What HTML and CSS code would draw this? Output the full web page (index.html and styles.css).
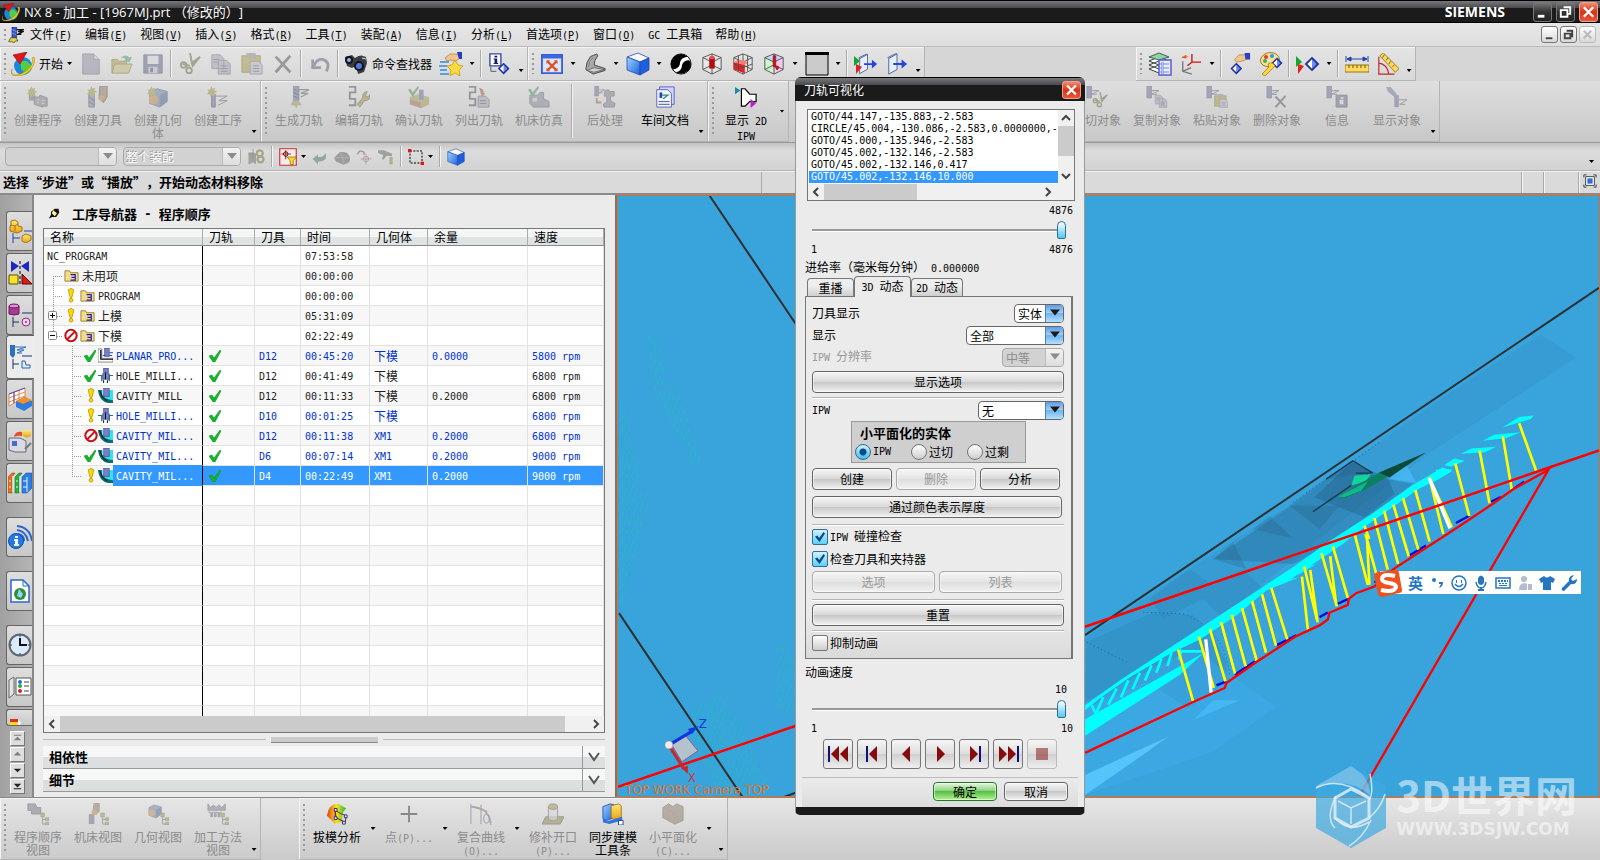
FILE: index.html
```html
<!DOCTYPE html>
<html lang="zh-CN">

<head>
    <meta charset="UTF-8">
    <meta name="viewport" content="width=device-width, initial-scale=1.0">
    <title>NX 8 - 加工</title>
    <link rel="stylesheet" href="styles.css">
</head>

<body>
    <!-- icon library -->
    <svg class="defs" aria-hidden="true">
        <defs>
            <linearGradient id="g-blue" x1="0" y1="0" x2="1" y2="1">
                <stop offset="0" stop-color="#9fd4ff" />
                <stop offset="1" stop-color="#1c62dd" />
            </linearGradient>
            <linearGradient id="g-gold" x1="0" y1="0" x2="0" y2="1">
                <stop offset="0" stop-color="#ffe978" />
                <stop offset="1" stop-color="#e5a414" />
            </linearGradient>
            <linearGradient id="g-heat" x1="0" y1="0" x2="1" y2="0">
                <stop offset="0" stop-color="#e33b1c" />
                <stop offset=".5" stop-color="#f7e51f" />
                <stop offset="1" stop-color="#22b93a" />
            </linearGradient>
        </defs>
        <symbol id="nx" viewBox="0 0 24 24">
            <circle cx="12" cy="14" r="9" fill="#1689dd" />
            <path d="M6 9q5 2 4 8l5 5q6-2 6-8l-5-5z" fill="#54cc46" />
            <path d="M1 17q-2 6 4 6q9-1 15-9q3-5 1-8l2-1q2 4-1 9q-6 10-16 10q-8 0-5-7z" fill="#ffd22e" stroke="#a97606" stroke-width=".5" />
            <path d="M2 3l14-3l-7 12z" fill="#e3141b" stroke="#82080c" stroke-width=".6" />
        </symbol>
        <symbol id="new" viewBox="0 0 24 24">
            <path d="M3 1h12l6 6v16H3z" fill="#8e90a4" stroke="#6b6c7c" />
            <path d="M15 1v6h6" fill="#c8c8d4" stroke="#6b6c7c" />
        </symbol>
        <symbol id="open" viewBox="0 0 24 24">
            <path d="M1 7h6l2 2h8v12H1z" fill="#a49a4e" stroke="#7a7138" />
            <path d="M4 12h19l-4 10H1z" fill="#c2b974" stroke="#7a7138" />
            <path d="M10 6q6-6 10-1l3-1l-3 6l-6-2l2-1q-2-3-6-1z" fill="#4b9a6c" />
        </symbol>
        <symbol id="save" viewBox="0 0 24 24">
            <path d="M2 2h20v20H2z" fill="#63678a" stroke="#4b4e6c" />
            <path d="M6 3h12v9H6z" fill="#d6d6dc" />
            <path d="M7 15h10v7H7z" fill="#b9bac6" />
            <path d="M9 16h3v5H9z" fill="#4b4e6c" />
        </symbol>
        <symbol id="cut" viewBox="0 0 24 24">
            <path d="M12 0l2 11l9-7l-8 10zM12 14L4 12" fill="#8a895e" stroke="#6c6b45" stroke-width="2" />
            <circle cx="5" cy="13" r="3" fill="none" stroke="#6c6b45" stroke-width="2" />
            <circle cx="11" cy="19" r="3" fill="none" stroke="#6c6b45" stroke-width="2" />
        </symbol>
        <symbol id="copy" viewBox="0 0 24 24">
            <path d="M2 2h9l4 4v11H2zM9 8h9l4 4v11H9z" fill="#a3a4b4" stroke="#6b6c80" />
            <path d="M4 7h6M4 10h4M12 14h7M12 17h7M12 20h7" stroke="#5a5b70" />
        </symbol>
        <symbol id="paste" viewBox="0 0 24 24">
            <path d="M1 3h20v18H1z" fill="#a59a48" stroke="#77702f" />
            <path d="M6 0h10v5H6z" fill="#8a8b98" />
            <path d="M10 9h9l4 4v10H10z" fill="#b8b8c6" stroke="#6b6c80" />
            <path d="M13 14h7M13 17h7M13 20h7" stroke="#5a5b70" />
        </symbol>
        <symbol id="del" viewBox="0 0 24 24">
            <path d="M4 4l16 17M20 3L4 21" stroke="#55565f" stroke-width="3" fill="none" />
        </symbol>
        <symbol id="undo" viewBox="0 0 24 24">
            <path d="M4 7v9h9M5 15q3-9 10-8q9 3 4 13" fill="none" stroke="#5d6175" stroke-width="3" />
        </symbol>
        <symbol id="binoc" viewBox="0 0 24 24">
            <path d="M1 5l7-2l3 3l5-3l6 2l1 6l-3 9l-6 2l-2-8l-4 2l-5-2z" fill="#3b3c44" />
            <circle cx="5" cy="8" r="4" fill="#14141c" />
            <circle cx="5" cy="8" r="2" fill="#8fb4ec" />
            <circle cx="15" cy="14" r="5" fill="#14141c" />
            <circle cx="15" cy="14" r="3" fill="#4f7bd8" />
            <path d="M12 4l5-1M18 6l4 1" stroke="#ddd" />
        </symbol>
        <symbol id="star" viewBox="0 0 24 24">
            <path d="M1 10h9M0 14h8M1 18h7M1 22h9" stroke="#2f8ed8" stroke-width="1.5" />
            <path d="M16 8l3 5l5 1l-4 4l1 6l-5-3l-5 3l1-6l-4-4l5-1z" fill="#ffdc3c" stroke="#c48f0f" stroke-width=".7" />
            <path d="M6 6l5-4l7 0l3 4l-4 3l-5-1l-4 1z" fill="#f2c489" stroke="#9b6b35" stroke-width=".6" />
            <path d="M18 0h5v7h-3z" fill="#1f3fc0" />
        </symbol>
        <symbol id="diamond" viewBox="0 0 24 24">
            <path d="M12 1l11 11l-11 11L1 12z" fill="#1d2f9c" />
            <path d="M12 5l7 7l-7 7z" fill="#6f8cf0" />
            <path d="M12 5v14l-7-7z" fill="#fff" />
        </symbol>
        <symbol id="info" viewBox="0 0 24 24">
            <path d="M1 1h12v13H1z" fill="#fff" stroke="#3945a8" stroke-width="1.5" />
            <path d="M6 3h3v2H6zM5 6h4v5h1v1H5v-1h1V7H5z" fill="#141d70" />
            <use href="#diamond" x="9" y="10" width="14" height="14" />
            <path d="M2 15v5h6" stroke="#555" fill="none" />
        </symbol>
        <symbol id="fit" viewBox="0 0 24 24">
            <path d="M1 2h22v20H1z" fill="#d8e6ff" stroke="#3a5ed6" stroke-width="2" />
            <path d="M1 2h22v4H1z" fill="#3a64e0" />
            <path d="M7 9l10 10M17 9L7 19" stroke="#e2501e" stroke-width="2.5" />
            <path d="M6 8h4l-4 4zM18 8v4l-4-4zM6 20v-4l4 4zM18 20h-4l4-4z" fill="#e2501e" />
        </symbol>
        <symbol id="seat" viewBox="0 0 24 24">
            <path d="M2 18q0-8 5-14l7-3l1 2q-4 5-4 10l12 4v2l-13 4z" fill="#a9a9a9" stroke="#3f3f3f" />
            <path d="M5 15q0-6 5-10M3 19l8-3l11 2l-11 3z" fill="#d3d3d3" stroke="#555" stroke-width=".8" />
        </symbol>
        <symbol id="cube" viewBox="0 0 24 24">
            <path d="M1 5l11-4l11 5l-9 4z" fill="#f4faff" stroke="#2748b4" stroke-width=".8" />
            <path d="M1 5l13 5v13L1 18z" fill="url(#g-blue)" stroke="#2748b4" stroke-width=".8" />
            <path d="M14 10l9-4v12l-9 5z" fill="#1e5fdc" stroke="#2748b4" stroke-width=".8" />
        </symbol>
        <symbol id="bw" viewBox="0 0 24 24">
            <circle cx="12" cy="12" r="11" fill="#fff" stroke="#000" />
            <path d="M12 1a11 11 0 0 0-9 17q8-1 8-8q1-5 8-6q-3-3-7-3zM21 8q-7 0-8 6q0 6-7 7q8 4 14-2q5-5 1-11z" fill="#000" />
        </symbol>
        <symbol id="wire" viewBox="0 0 24 24">
            <path d="M2 5l10-4l10 4v13l-10 5L2 18zM2 5l10 5l10-5M12 10v13M12 1v11M2 18l10-5l10 5" fill="#ffffff44" stroke="#505050" />
        </symbol>
        <symbol id="box1" viewBox="0 0 24 24">
            <use href="#wire" width="24" height="24" />
            <path d="M9 5h6v12H9z" fill="#b30c10" />
            <ellipse cx="12" cy="5" rx="3" ry="2" fill="#f04b4b" />
        </symbol>
        <symbol id="box2" viewBox="0 0 24 24">
            <use href="#wire" width="24" height="24" />
            <path d="M2 10l12 3v9L2 18z" fill="#e52022" />
            <path d="M2 10l5-3l11 3l-4 3z" fill="#ff7b76" />
            <path d="M7 3v17M17 3v17M2 12l10 4l10-4" stroke="#505050" fill="none" />
        </symbol>
        <symbol id="box3" viewBox="0 0 24 24">
            <path d="M2 5l10 5v13L2 18z" fill="#baf4bd" />
            <path d="M22 5l-10 5v13l10-5z" fill="#f9b4ec" />
            <path d="M12 1l10 4l-10 5L2 5z" fill="#b8d2ff" />
            <use href="#wire" width="24" height="24" />
            <path d="M11 3h3v12h-3zM13 15q5-2 4 2q-2 3-3 0" fill="#c8181b" stroke="#8f090c" stroke-width=".6" />
        </symbol>
        <symbol id="swatch" viewBox="0 0 24 24">
            <path d="M1 1h22v22H1z" fill="#cbcbcb" stroke="#000" />
            <path d="M0 0h24v3H0z" />
        </symbol>
        <symbol id="exit1" viewBox="0 0 24 24">
            <path d="M3 6l9-5v17l-9 5z" fill="#e6eeff" stroke="#4b5d9c" />
            <path d="M3 6l-1-1l8-4h2" fill="none" stroke="#4b5d9c" />
            <path d="M8 11h9V7l6 5l-6 5v-4H8z" fill="#2444e2" />
        </symbol>
        <symbol id="exit2" viewBox="0 0 24 24">
            <use href="#exit1" x="3" width="21" height="24" />
            <path d="M0 4l6 5l-6 5z" fill="#12a62c" />
            <path d="M2 12l6 3l-6 7z" fill="#db251b" />
        </symbol>
        <symbol id="layers" viewBox="0 0 24 24">
            <path d="M1 17l10-4l10 4l-10 4zM1 13l10-4l10 4l-10 4zM1 9l10-4l10 4l-10 4z" fill="#fff" stroke="#3d4640" />
            <path d="M1 5l10-4l10 4l-10 3z" fill="#8fd3a5" stroke="#3d6850" />
            <path d="M11 8h12v15H11z" fill="#e8efff" stroke="#5a5ad8" stroke-width="1.5" />
            <path d="M13 11h3v2h-3zM13 15h3v2h-3zM13 19h3v2h-3zM17 12h4M17 16h4M17 20h4" stroke="#5a6bc8" fill="#fff" stroke-width=".8" />
        </symbol>
        <symbol id="csys" viewBox="0 0 24 24">
            <path d="M13 1v9h10M13 10l-5 4" stroke="#d41515" fill="none" stroke-width="1.5" />
            <path d="M3 9v11l10 3M3 20l9-4" stroke="#777" fill="none" stroke-width="1.5" />
            <path d="M1 5l6-3v2l3-1l-4 3z" fill="#f25a1b" />
        </symbol>
        <symbol id="handd" viewBox="0 0 24 24">
            <use href="#diamond" x="1" y="10" width="14" height="14" />
            <path d="M6 7l5-5l7 0l1 5l-5 2l-6 1z" fill="#f2c489" stroke="#9b6b35" stroke-width=".6" />
            <path d="M17 0h6v7h-5z" fill="#2743c4" />
        </symbol>
        <symbol id="palette" viewBox="0 0 24 24">
            <path d="M2 6q4-7 13-5q7 3 5 9q-5 0-6 4q-9 2-12-3q-1-3 0-5z" fill="#f7df9d" stroke="#a27821" />
            <circle cx="7" cy="5" r="2" fill="#e03a2e" />
            <circle cx="13" cy="4" r="2" fill="#1fa0de" />
            <circle cx="6" cy="9" r="2" fill="#30b64b" />
            <use href="#diamond" x="12" y="5" width="12" height="12" />
            <path d="M9 12q5-3 7 2l-2 2l-8 8l-3-2l7-7z" fill="#ffd53f" stroke="#96720e" stroke-width=".7" />
        </symbol>
        <symbol id="playd" viewBox="0 0 24 24">
            <path d="M0 4l6 6l-6 5z" fill="#12a62c" />
            <path d="M2 12l6 2l-6 8z" fill="#db251b" />
            <use href="#diamond" x="8" y="4" width="16" height="16" />
        </symbol>
        <symbol id="ruler" viewBox="0 0 24 24">
            <path d="M1 4v6M23 4v6M2 7h20M2 7l4-2v4zM22 7l-4-2v4z" stroke="#2244aa" fill="#2244aa" />
            <path d="M0 13h24v7H0z" fill="#ffdc5e" stroke="#99741b" />
            <path d="M4 13v3M8 13v3M12 13v3M16 13v3M20 13v3" stroke="#69500f" />
        </symbol>
        <symbol id="angle" viewBox="0 0 24 24">
            <path d="M2 4v19h17M2 11q9 1 11 12" stroke="#c42528" fill="none" stroke-width="1.3" />
            <path d="M3 3l4-3l17 17l-4 4z" fill="#ffdc5e" stroke="#99741b" />
            <path d="M8 2l-2 3M12 5l-2 3M15 9l-2 3M19 13l-2 2" stroke="#69500f" />
        </symbol>
        <symbol id="mill" viewBox="0 0 24 24">
            <path d="M6 0h6v16H6z" fill="#6c709a" stroke="#4b4e70" stroke-width=".7" />
            <path d="M6 3l6 3M6 7l6 3M6 11l6 3" stroke="#3a3c58" />
            <path d="M12 4h11l-9 4h8l-8 4" fill="none" stroke="#5b5c66" stroke-width="1.2" />
            <path d="M5 16l-2 5h4l2 3l2-3h4l-3-5z" fill="#9e985e" />
        </symbol>
        <symbol id="app" viewBox="0 0 24 24">
            <path d="M6 0h7v16H6z" fill="#3a55cc" stroke="#1b2868" />
            <path d="M6 4l7 3M6 9l7 3" stroke="#9ab0ff" />
            <path d="M13 4h11l-9 3h7l-7 4h5" fill="none" stroke="#111" stroke-width="2" />
            <path d="M4 16l-3 6h5l3 2l2-3h4l-3-5z" fill="#e6d23a" stroke="#333" />
        </symbol>
        <symbol id="mill-s" viewBox="0 0 24 24">
            <path d="M1 0h5v13H1z" fill="#6c709a" stroke="#4b4e70" stroke-width=".7" />
            <path d="M6 5h8l-8 4h6" fill="none" stroke="#5b5c66" />
        </symbol>
        <symbol id="spark" viewBox="0 0 24 24">
            <path d="M5 0l1 3l3-1l-1 3l3 1l-3 2l1 3l-3-1l-2 2l-1-3l-3 0l2-3l-2-2l3 0z" fill="#9b9641" />
        </symbol>
        <symbol id="c-prog" viewBox="0 0 24 24">
            <path d="M2 8h7v8H2z" fill="#75798c" />
            <path d="M8 12h6v-2l8 3v9h-5v1l-9-3z" fill="#84868f" stroke="#5c5e6c" />
            <path d="M11 15h2M16 16h3M11 18h2M16 19h3" stroke="#d0d0d6" />
            <use href="#spark" width="24" height="24" />
        </symbol>
        <symbol id="c-tool" viewBox="0 0 24 24">
            <path d="M2 8h6v15H2z" fill="#7d88a0" stroke="#4e5770" />
            <path d="M2 12l6 4M2 17l6 4" stroke="#3c4358" />
            <path d="M14 0h8v12l-4 6l-5-4z" fill="#8a7c66" stroke="#5a5040" />
            <circle cx="16" cy="13" r="3" fill="#b9893c" />
            <use href="#spark" width="24" height="24" />
        </symbol>
        <symbol id="geo" viewBox="0 0 24 24">
            <path d="M3 7l8-4l11 3v11l-8 6L3 19z" fill="#6f83a6" stroke="#4a5a7a" />
            <path d="M14 10l8-4v11l-8 6z" fill="#4f6590" />
            <circle cx="7" cy="15" r="5" fill="#c08d4a" />
        </symbol>
        <symbol id="c-geo" viewBox="0 0 24 24">
            <use href="#geo" width="24" height="24" />
            <use href="#spark" width="24" height="24" />
        </symbol>
        <symbol id="c-op" viewBox="0 0 24 24">
            <path d="M5 9h4v14H5z" fill="#6c709a" stroke="#4b4e70" />
            <path d="M9 11h13l-9 5h9l-10 5" fill="none" stroke="#5b5c66" />
            <use href="#spark" width="24" height="24" />
        </symbol>
        <symbol id="snake" viewBox="0 0 24 24">
            <path d="M1 1h7v6H2v7h6v7H1" fill="none" stroke="#555660" stroke-width="2" />
        </symbol>
        <symbol id="edit" viewBox="0 0 24 24">
            <use href="#snake" width="24" height="24" />
            <path d="M10 20l6-7q-1-6 5-7l-2 5l3 1l2-3q1 7-6 7l-5 7z" fill="#9a8e4a" stroke="#6d6430" />
        </symbol>
        <symbol id="tick-d" viewBox="0 0 24 24">
            <path d="M0 4l3-1l2 4l6-7l1 2l-7 10z" fill="#4f8e62" />
        </symbol>
        <symbol id="verify" viewBox="0 0 24 24">
            <path d="M2 12l9-3l12 3v8l-9 4l-12-4z" fill="#9aa05c" />
            <path d="M2 15l12 3v6L2 20z" fill="#a86c55" />
            <path d="M14 18l9-3v5l-9 4z" fill="#a8964c" />
            <path d="M12 4h5v11h-5z" fill="#686c92" />
            <use href="#tick-d" width="24" height="24" />
        </symbol>
        <symbol id="list" viewBox="0 0 24 24">
            <use href="#snake" width="24" height="24" />
            <path d="M12 2q6 1 5 6l2 0l-4 4" fill="#a05f48" />
            <path d="M11 11h8l4 4v8H11z" fill="#a3a4b4" stroke="#5f6072" />
            <path d="M13 16h7M13 19h7" stroke="#4a4b5a" />
        </symbol>
        <symbol id="machine" viewBox="0 0 24 24">
            <path d="M2 10h9l2-3h4v7l6 3v6H6l-4-4z" fill="#858796" stroke="#5e606c" />
            <path d="M5 13h5v4H5z" fill="#c3c4cc" />
            <use href="#tick-d" width="24" height="24" />
        </symbol>
        <symbol id="post" viewBox="0 0 24 24">
            <use href="#mill-s" width="20" height="20" />
            <path d="M12 5l4-1l1 2h5v5h-4v5l5 3l-1 4H11l-1-3l4-3v-6h-3z" fill="#81838f" stroke="#5e606c" />
            <path d="M3 13v5h5" stroke="#a0653a" fill="none" stroke-width="2" />
        </symbol>
        <symbol id="doc" viewBox="0 0 24 24">
            <path d="M6 1h16v19H6z" fill="#cfd6ff" stroke="#5a5fc0" />
            <path d="M3 4h12l4 4v15H3z" fill="#f1f5ff" stroke="#5a5fc0" />
            <path d="M6 7h3v6H6z" fill="#2844b8" />
            <path d="M9 10h6l-5 4" stroke="#2e8a64" fill="none" stroke-width="1.5" />
            <path d="M5 17h12M5 20h12" stroke="#464c80" />
        </symbol>
        <symbol id="show2d" viewBox="0 0 24 24">
            <path d="M7 3l4 0l5 6h7v8h-7l-5 5l-4 0z" fill="#fff" stroke="#000" stroke-width="1.3" />
            <path d="M0 1l6 4l-6 4z" fill="#1290a8" />
            <path d="M17 14l6 5l-6 5z" fill="#c11dc6" />
        </symbol>
        <symbol id="o-info" viewBox="0 0 24 24">
            <use href="#mill-s" width="24" height="24" />
            <path d="M11 10h12v13H11z" fill="#6b6e86" stroke="#50536a" />
            <path d="M16 12h3v2h-3zM15 15h4v5h-4z" fill="#d6d7df" />
        </symbol>
        <symbol id="o-show" viewBox="0 0 24 24">
            <path d="M0 1l5 0l7 8l-3 3l-7-6z" fill="#6d7d94" />
            <path d="M9 10h5v13H9z" fill="#6c709a" />
            <path d="M14 15h9l-8 5h6" fill="none" stroke="#5b5c66" />
        </symbol>
        <symbol id="tree-s" viewBox="0 0 24 24">
            <path d="M17 13v10h4M17 18h4" stroke="#666" fill="none" />
            <path d="M15 11h4v4h-4zM20 16h4v3h-4zM20 21h4v3h-4z" fill="#9b9758" stroke="#66643a" stroke-width=".6" />
        </symbol>
        <symbol id="v-prog" viewBox="0 0 24 24">
            <path d="M1 1h8l2 4h4v7H5V8H1z" fill="#777a8a" stroke="#565866" />
            <use href="#tree-s" width="24" height="24" />
        </symbol>
        <symbol id="v-tool" viewBox="0 0 24 24">
            <path d="M2 12h6v11H2z" fill="#69728c" />
            <path d="M7 0h7v9l-4 4l-4-3z" fill="#857a66" />
            <circle cx="8" cy="10" r="3" fill="#b9893c" />
            <use href="#tree-s" width="24" height="24" />
        </symbol>
        <symbol id="v-geo" viewBox="0 0 24 24">
            <use href="#geo" width="17" height="17" />
            <use href="#tree-s" width="24" height="24" />
        </symbol>
        <symbol id="v-way" viewBox="0 0 24 24">
            <path d="M1 1l3 4l3-3l3 3l3-3l3 3l4-4v7H1zM1 10h3v5h2v-5h2v5h2v-5h2v5h2v-5h2" fill="#7c7f8e" stroke="#595b68" stroke-width=".8" />
            <use href="#tree-s" width="24" height="24" />
        </symbol>
        <symbol id="draft" viewBox="0 0 24 24">
            <path d="M1 14q2-14 13-13l8 5q-6 5-4 14l-8 3z" fill="url(#g-heat)" />
            <path d="M10 8l5 3l7 3l-1 7l-10-5zM10 7v9" fill="none" stroke="#7c0d14" />
            <path d="M9 6h3v3H9zM20 13h3v3h-3zM9 15h3v3H9zM18 20h3v3h-3z" fill="#fff" stroke="#22207e" />
        </symbol>
        <symbol id="point" viewBox="0 0 24 24">
            <path d="M12 3v18M3 12h18" stroke="#333" stroke-width="2" />
        </symbol>
        <symbol id="curve" viewBox="0 0 24 24">
            <path d="M1 1v22M1 4q19 0 22 20M1 4l18 5M12 2v21" fill="none" stroke="#565c7c" />
            <path d="M3 4q17 1 20 18" fill="none" stroke="#9b6a60" stroke-width="1.5" />
            <ellipse cx="18" cy="17" rx="3" ry="5" fill="none" stroke="#565c7c" />
        </symbol>
        <symbol id="patch" viewBox="0 0 24 24">
            <path d="M4 15h20l-4 8H0z" fill="#8d8654" stroke="#625d37" />
            <path d="M7 4v14q5 3 10 0V4z" fill="#d2d2d2aa" stroke="#666" />
            <ellipse cx="12" cy="4" rx="5" ry="3" fill="#9a9360" stroke="#625d37" />
        </symbol>
        <symbol id="sync" viewBox="0 0 24 24">
            <path d="M1 4l8-3l4 1v14l-8 3l-4-2z" fill="url(#g-blue)" stroke="#2152b8" />
            <path d="M10 3l8-2l3 2v13l-8 2l-3-2z" fill="url(#g-gold)" stroke="#b07610" />
            <path d="M1 17l5 3l16-5v4L8 23l-7-2z" fill="#2f74e0" />
            <path d="M18 19h5v5h-5z" fill="#fff" stroke="#223a90" />
        </symbol>
        <symbol id="facet" viewBox="0 0 24 24">
            <path d="M1 5l6-4l5 3l4-3l7 3v15l-9 4L1 16z" fill="#85816a" stroke="#625e4a" />
            <path d="M1 5l13 6l9-7M14 11v12M1 16L14 11M7 1v18" fill="none" stroke="#a26468" />
        </symbol>
        <symbol id="folder" viewBox="0 0 16 16">
            <path d="M1 3h5l1 2h8v9H1z" fill="#f3dc8c" stroke="#9c8138" />
            <path d="M7 7h5v6H7M8 10h4" stroke="#2020a8" fill="none" stroke-width="1.3" />
        </symbol>
        <symbol id="warn" viewBox="0 0 8 16">
            <path d="M1 2q3-3 6 0l-2 8H3z" fill="#ffd900" stroke="#b58e00" stroke-width=".8" />
            <circle cx="4" cy="13" r="2" fill="#ffd900" stroke="#b58e00" stroke-width=".8" />
        </symbol>
        <symbol id="stop" viewBox="0 0 16 16">
            <circle cx="8" cy="8" r="6.500" fill="#fff" stroke="#c8141a" stroke-width="2.4" />
            <path d="M12 4L4 12" stroke="#c8141a" stroke-width="2.2" />
        </symbol>
        <symbol id="ok" viewBox="0 0 12 12">
            <path d="M0 6l3-1l2 3l6-8l1 1l-6 11H4z" fill="#14b52c" stroke="#0b8d1e" stroke-width=".5" />
        </symbol>
        <symbol id="planar" viewBox="0 0 16 16">
            <path d="M0 1h4v10h12v4H0z" fill="#fff" stroke="#888" />
            <path d="M3 2v10h13" fill="none" stroke="#000" stroke-width="1.3" />
            <path d="M7 0h5v9H7z" fill="#7880c8" stroke="#333b80" stroke-width=".6" />
            <path d="M12 5h4M5 8h3M12 8h3" stroke="#2142d8" />
        </symbol>
        <symbol id="hole" viewBox="0 0 16 16">
            <path d="M0 8h4v6M16 8h-4v6" fill="none" stroke="#117a80" stroke-width="1.3" />
            <path d="M6 0h5v5H6zM5 6h7v6H5z" fill="#7880c8" stroke="#333b80" stroke-width=".7" />
            <path d="M8 5v7M6 13v3M10 13v3" stroke="#000" />
        </symbol>
        <symbol id="cavity" viewBox="0 0 16 16">
            <path d="M0 2h5v5h6V2h5v13h-5Q2 13 0 2z" fill="#36e2e8" />
            <path d="M0 2h4v5q3 5 12 6v3h-5Q1 14 0 2z" fill="#0e6d72" />
            <path d="M6 0h6v9H6z" fill="#7880c8" stroke="#333b80" stroke-width=".6" />
            <path d="M2 3l3 7l5 4" stroke="#000" fill="none" />
        </symbol>
        <symbol id="s-asm" viewBox="0 0 24 24">
            <path d="M3 2l4-1l3 2v4l4 1v4l-5 2l-7-2V7l1-1z" fill="url(#g-gold)" stroke="#a9710c" />
            <path d="M3 6l4 1l3-2M7 7v5" fill="none" stroke="#a9710c" />
            <path d="M14 17l4-2l5 2v4l-5 3l-4-2z" fill="url(#g-gold)" stroke="#a9710c" />
            <path d="M5 14v10M5 19h7M16 12h8" stroke="#2040a8" fill="none" />
        </symbol>
        <symbol id="s-mir" viewBox="0 0 24 24">
            <path d="M3 0l8 5l-8 6zM21 0l-8 5l8 6z" fill="#1c28c2" />
            <path d="M12 0v24" stroke="#000" stroke-dasharray="3 2" />
            <path d="M1 14h9v9H1z" fill="#f8e22c" stroke="#605300" />
            <path d="M14 13l10 10H14z" fill="#d81c1c" stroke="#600" />
        </symbol>
        <symbol id="s-part" viewBox="0 0 24 24">
            <path d="M1 3h10v8q-5 2-10 0z" fill="#a83a92" stroke="#64195a" />
            <ellipse cx="6" cy="3" rx="5" ry="2" fill="#e290d4" stroke="#64195a" />
            <path d="M5 14v10M5 19h6M14 10h10" stroke="#1c2c70" />
            <circle cx="18" cy="19" r="4" fill="#f5d1ef" stroke="#8c2f80" />
            <circle cx="18" cy="19" r="1" fill="#8c2f80" />
        </symbol>
        <symbol id="s-op" viewBox="0 0 24 24">
            <path d="M2 0h5v10l-2 3l-3-3z" fill="#2d70bd" />
            <path d="M7 2h11l-9 3h7l-7 3h5" stroke="#2d70bd" fill="none" />
            <path d="M5 14v10M5 19h6M14 11h10" stroke="#1c2c70" />
            <path d="M14 16l3 0l1 4h4v3h-8z" fill="#e2ecfa" stroke="#2d5fa8" />
        </symbol>
        <symbol id="s-mach" viewBox="0 0 24 24">
            <path d="M1 7l16-6v9l-16 9zM1 11l16-6M1 15l16-6M6 5v11M11 3v10" fill="#fff" stroke="#e08a4a" />
            <path d="M1 7l16-6M6 5v11" stroke="#5a4ab8" />
            <path d="M8 14l9-4l7 4v5l-8 5l-8-4z" fill="#2f7be0" />
            <path d="M8 14l9-4l7 3l-9 4z" fill="#f78e28" />
        </symbol>
        <symbol id="s-cam" viewBox="0 0 24 24">
            <path d="M1 9h11l6 3v11l-11 0l-6-2z" fill="#d9dbe4" stroke="#666a7c" />
            <path d="M4 12h5v5H4z" fill="#4c68c8" />
            <path d="M6 8q1-6 8-5v4q-4-1-8 1z" fill="#e2502a" />
            <path d="M14 2q4-2 9 0v5q-4 3-8 0z" fill="url(#g-gold)" />
            <path d="M17 20l6-6" stroke="#777" stroke-width="2" />
        </symbol>
        <symbol id="s-lib" viewBox="0 0 24 24">
            <path d="M0 6l4-4h3l-3 4v16H0z" fill="#e8731c" stroke="#8a3e08" stroke-width=".5" />
            <path d="M7 6l4-4h3l-3 4v16H7z" fill="#29b335" stroke="#12671a" stroke-width=".5" />
            <path d="M14 6l4-4h6v15l-5 5h-5z" fill="#2b7fe0" stroke="#134a90" stroke-width=".5" />
            <path d="M1 10h2M8 10h2M15 10h4M1 16h2M8 16h2M15 16h4M19 6v15M5 5v16M12 5v16" stroke="#e8f2ff" />
        </symbol>
        <symbol id="s-info" viewBox="0 0 24 24">
            <path d="M9 1q13 1 15 15M9 5q9 1 11 11M10 9q6 1 6 7" fill="none" stroke="#2b66c8" stroke-width="2" />
            <circle cx="8" cy="16" r="7.500" fill="#1e7be4" stroke="#0f4fa8" />
            <path d="M7 11h3v2H7zM6 14h4v5h1v2H6v-2h1v-3H6z" fill="#fff" />
        </symbol>
        <symbol id="s-web" viewBox="0 0 24 24">
            <path d="M3 1h12l6 6v16H3z" fill="#fff" stroke="#2a68c8" stroke-width="1.5" />
            <path d="M15 1v6h6" fill="none" stroke="#2a68c8" />
            <circle cx="12" cy="15" r="6" fill="#2f8f38" />
            <path d="M11 10l4 5l-2 4l-4-2z" fill="#8fd6f4" />
        </symbol>
        <symbol id="s-clock" viewBox="0 0 24 24">
            <circle cx="12" cy="12" r="10.500" fill="#dbeafc" stroke="#5e6674" stroke-width="2" />
            <path d="M12 5v7h7" fill="none" stroke="#111" stroke-width="2" />
            <path d="M12 2v2M12 20v2M2 12h2M20 12h2" stroke="#333" />
        </symbol>
        <symbol id="s-role" viewBox="0 0 24 24">
            <path d="M8 3h15v17H8z" fill="#fff" stroke="#555" />
            <path d="M1 5l5-3v17l-5 4z" fill="#e4e4e4" stroke="#666" />
            <circle cx="12" cy="7" r="2" fill="#2b6be0" />
            <circle cx="12" cy="11" r="2" fill="#24ac3c" />
            <circle cx="12" cy="16" r="2" fill="#e02121" />
            <path d="M16 7h5M16 11h5M16 16h5" stroke="#444" />
        </symbol>
        <symbol id="s-heat" viewBox="0 0 24 24">
            <path d="M2 2h8v8H2z" fill="#e0301c" />
            <path d="M2 5h8v5H2z" fill="#ffd820" />
            <path d="M10 2l3 4l-3 4z" fill="#fff" />
        </symbol>
        <symbol id="find" viewBox="0 0 24 24">
            <path d="M2 6h7l3 3v13l-4-3l-6 3z" fill="#6c7068" />
            <path d="M8 1v13M2 8h12" stroke="#5a3c3c" fill="none" />
            <circle cx="17" cy="7" r="4" fill="none" stroke="#77733c" stroke-width="3" />
            <circle cx="18" cy="15" r="4" fill="none" stroke="#77733c" stroke-width="3" />
        </symbol>
        <symbol id="filter" viewBox="0 0 24 24">
            <path d="M1 1h22v22H1z" fill="#f6ecec" stroke="#cc2c32" stroke-width="1.500" />
            <path d="M3 8h13M9 3v12" stroke="#d02020" stroke-width="1.500" />
            <circle cx="9" cy="8" r="3" fill="none" stroke="#000" />
            <path d="M11 12h12l-4 5v5h-4v-5z" fill="#ffd92a" stroke="#936e00" />
        </symbol>
        <symbol id="back" viewBox="0 0 24 24">
            <path d="M1 15l8-7v4q9 1 11-6q5 12-11 13v4z" fill="#4c786e" />
        </symbol>
        <symbol id="rock" viewBox="0 0 24 24">
            <path d="M1 13l8-8l10 1l5 7l-2 7l-8 3L3 18z" fill="#646464" stroke="#474747" />
            <path d="M9 5l4 8l11 0M1 13l12 0l1 10" fill="none" stroke="#9b9b9b" />
        </symbol>
        <symbol id="rot" viewBox="0 0 24 24">
            <path d="M2 8q3-8 10-3v4" fill="none" stroke="#555" stroke-width="2" />
            <circle cx="15" cy="15" r="4" fill="none" stroke="#87484c" />
            <path d="M15 7v16M7 15h16" stroke="#87484c" />
        </symbol>
        <symbol id="hammer" viewBox="0 0 24 24">
            <path d="M0 2h9l12 5v4l-8-1l-5 6l-2-1l2-6l-8-3z" fill="#606b60" />
            <path d="M17 12h5v11h-5z" fill="#8b8a58" />
        </symbol>
        <symbol id="marquee" viewBox="0 0 24 24">
            <path d="M3 3h18v18H3z" fill="none" stroke="#000" stroke-width="1.500" stroke-dasharray="3 2" />
            <path d="M0 0h5v5H0zM19 19h5v5h-5z" fill="#e01515" />
        </symbol>
        <symbol id="full" viewBox="0 0 16 16">
            <path d="M1 4V1h3M12 1h3v3M15 12v3h-3M4 15H1v-3" fill="none" stroke="#333" />
            <path d="M3 3h10v10H3z" fill="#fff" stroke="#333" />
            <path d="M5 5h6v6H5z" fill="#2c6fd0" />
        </symbol>
        <symbol id="pin" viewBox="0 0 16 16">
            <path d="M1 14l3-5v-4l5-4h5l1 5l-4 6H6z" fill="#111" />
            <path d="M7 3l5 4l-3 4l-4-4z" fill="#fff48a" />
        </symbol>
    </svg>

    <header class="titlebar">
        <svg class="i18"><use href="#nx" /></svg>
        <h1>NX 8 - 加工 - [1967MJ.prt （修改的）]</h1>
        <span class="brand">SIEMENS</span>
        <button class="win-btn" aria-label="最小化"><svg viewBox="0 0 18 18"><path d="M4 12h7v3H4z" fill="#fff" /></svg></button>
        <button class="win-btn" aria-label="还原"><svg viewBox="0 0 18 18"><path d="M7 4h7v7h-2M4 7h7v7H4z" fill="none" stroke="#fff" stroke-width="2" /></svg></button>
        <button class="win-btn close" aria-label="关闭"><svg viewBox="0 0 18 18"><path d="M4 4l10 10M14 4L4 14" stroke="#fff" stroke-width="2.500" /></svg></button>
    </header>

    <nav class="menubar">
        <span class="grip"></span>
        <svg class="i16"><use href="#app" /></svg>
        <button>文件<span class="en">(<u>F</u>)</span></button>
        <button>编辑<span class="en">(<u>E</u>)</span></button>
        <button>视图<span class="en">(<u>V</u>)</span></button>
        <button>插入<span class="en">(<u>S</u>)</span></button>
        <button>格式<span class="en">(<u>R</u>)</span></button>
        <button>工具<span class="en">(<u>T</u>)</span></button>
        <button>装配<span class="en">(<u>A</u>)</span></button>
        <button>信息<span class="en">(<u>I</u>)</span></button>
        <button>分析<span class="en">(<u>L</u>)</span></button>
        <button>首选项<span class="en">(<u>P</u>)</span></button>
        <button>窗口<span class="en">(<u>O</u>)</span></button>
        <button><span class="en">GC </span>工具箱</button>
        <button>帮助<span class="en">(<u>H</u>)</span></button>
        <div class="mdi">
            <button aria-label="最小化窗口"><svg viewBox="0 0 16 16"><path d="M4 11h7v2H4z" fill="#444" /></svg></button>
            <button aria-label="还原窗口"><svg viewBox="0 0 16 16"><path d="M6 4h6v6h-2M4 7h6v5H4z" fill="none" stroke="#444" stroke-width="2" /></svg></button>
            <button aria-label="关闭窗口" disabled><svg viewBox="0 0 16 16"><path d="M4 4l8 8M12 4l-8 8" stroke="#888" stroke-width="2" /></svg></button>
        </div>
    </nav>

    <div class="bar std">
        <div class="group">
            <span class="grip"></span>
            <button class="wide"><svg class="i24"><use href="#nx" /></svg>开始<i class="caret"></i></button>
            <button class="tb" disabled aria-label="新建"><svg class="i22"><use href="#new" /></svg></button>
            <button class="tb" disabled aria-label="打开"><svg class="i22"><use href="#open" /></svg></button>
            <button class="tb" disabled aria-label="保存"><svg class="i22"><use href="#save" /></svg></button>
            <span class="sep"></span>
            <button class="tb" disabled aria-label="剪切"><svg class="i22"><use href="#cut" /></svg></button>
            <button class="tb" disabled aria-label="复制"><svg class="i22"><use href="#copy" /></svg></button>
            <button class="tb" disabled aria-label="粘贴"><svg class="i22"><use href="#paste" /></svg></button>
            <button class="tb" disabled aria-label="删除"><svg class="i22"><use href="#del" /></svg></button>
            <span class="sep"></span>
            <button class="tb" disabled aria-label="撤消"><svg class="i22"><use href="#undo" /></svg></button>
            <span class="sep"></span>
            <button class="wide"><svg class="i24"><use href="#binoc" /></svg>命令查找器</button>
            <button class="tb" aria-label="收藏"><svg class="i24"><use href="#star" /></svg></button>
            <button class="drop" aria-label="更多"><i class="caret"></i></button>
            <span class="sep"></span>
            <button class="tb" aria-label="对象信息"><svg class="i22"><use href="#info" /></svg></button>
            <button class="drop low" aria-label="工具条选项"><i class="caret"></i></button>
        </div>
        <div class="group">
            <span class="grip"></span>
            <button class="tb" aria-label="适合窗口"><svg class="i22"><use href="#fit" /></svg></button>
            <button class="drop" aria-label="更多"><i class="caret"></i></button>
            <button class="tb" aria-label="透视"><svg class="i22"><use href="#seat" /></svg></button>
            <button class="drop" aria-label="更多"><i class="caret"></i></button>
            <button class="tb" aria-label="着色"><svg class="i24"><use href="#cube" /></svg></button>
            <button class="drop" aria-label="更多"><i class="caret"></i></button>
            <button class="tb" aria-label="背景"><svg class="i22"><use href="#bw" /></svg></button>
            <button class="tb" aria-label="剖切"><svg class="i22"><use href="#box1" /></svg></button>
            <button class="tb" aria-label="编辑剖切"><svg class="i22"><use href="#box2" /></svg></button>
            <button class="tb" aria-label="方位"><svg class="i22"><use href="#box3" /></svg></button>
            <button class="drop" aria-label="更多"><i class="caret"></i></button>
            <button class="tb" aria-label="颜色"><svg class="i24"><use href="#swatch" /></svg></button>
            <button class="drop" aria-label="更多"><i class="caret"></i></button>
            <span class="sep"></span>
            <button class="tb" aria-label="显示隐藏"><svg class="i24"><use href="#exit2" /></svg></button>
            <button class="tb" aria-label="退出"><svg class="i22"><use href="#exit1" /></svg></button>
            <button class="drop low" aria-label="工具条选项"><i class="caret"></i></button>
        </div>
        <div class="group utility">
            <span class="grip"></span>
            <button class="tb" aria-label="图层设置"><svg class="i24"><use href="#layers" /></svg></button>
            <button class="tb" aria-label="坐标系"><svg class="i22"><use href="#csys" /></svg></button>
            <button class="drop" aria-label="更多"><i class="caret"></i></button>
            <span class="sep"></span>
            <button class="tb" aria-label="选择对象"><svg class="i22"><use href="#handd" /></svg></button>
            <button class="tb" aria-label="对象显示"><svg class="i24"><use href="#palette" /></svg></button>
            <span class="sep"></span>
            <button class="tb" aria-label="移动对象"><svg class="i24"><use href="#playd" /></svg></button>
            <button class="drop" aria-label="更多"><i class="caret"></i></button>
            <span class="sep"></span>
            <button class="tb" aria-label="测量距离"><svg class="i24"><use href="#ruler" /></svg></button>
            <button class="tb" aria-label="测量角度"><svg class="i22"><use href="#angle" /></svg></button>
            <button class="drop low" aria-label="工具条选项"><i class="caret"></i></button>
        </div>
    </div>

    <div class="bar cam">
        <div class="group">
            <span class="grip"></span>
            <button class="big" disabled><svg class="i22"><use href="#c-prog" /></svg>创建程序</button>
            <button class="big" disabled><svg class="i22"><use href="#c-tool" /></svg>创建刀具</button>
            <button class="big" disabled><svg class="i22"><use href="#c-geo" /></svg>创建几何<br>体</button>
            <button class="big" disabled><svg class="i22"><use href="#c-op" /></svg>创建工序</button>
            <button class="drop low" aria-label="工具条选项"><i class="caret"></i></button>
        </div>
        <div class="group">
            <span class="grip"></span>
            <button class="big" disabled><svg class="i22"><use href="#mill" /></svg>生成刀轨</button>
            <button class="big" disabled><svg class="i22"><use href="#edit" /></svg>编辑刀轨</button>
            <button class="big" disabled><svg class="i22"><use href="#verify" /></svg>确认刀轨</button>
            <button class="big" disabled><svg class="i22"><use href="#list" /></svg>列出刀轨</button>
            <button class="big" disabled><svg class="i22"><use href="#machine" /></svg>机床仿真</button>
            <span class="sep"></span>
            <button class="big" disabled><svg class="i22"><use href="#post" /></svg>后处理</button>
            <button class="big"><svg class="i22"><use href="#doc" /></svg>车间文档</button>
            <button class="drop low" aria-label="工具条选项"><i class="caret"></i></button>
        </div>
        <div class="group">
            <span class="grip"></span>
            <button class="big"><svg class="i24"><use href="#show2d" /></svg>显示<span class="en"> 2D<br>IPW</span></button>
            <button class="drop" aria-label="更多"><i class="caret"></i></button>
        </div>
        <div class="group objects">
            <button class="big" disabled><svg class="i22"><use href="#mill-s" /><use href="#cut" x="6" y="6" width="16" height="16" /></svg>剪切对象</button>
            <button class="big" disabled><svg class="i22"><use href="#mill-s" /><use href="#copy" x="8" y="8" width="14" height="14" /></svg>复制对象</button>
            <button class="big" disabled><svg class="i22"><use href="#mill-s" /><use href="#paste" x="8" y="8" width="14" height="14" /></svg>粘贴对象</button>
            <button class="big" disabled><svg class="i22"><use href="#mill-s" /><use href="#del" x="7" y="8" width="15" height="15" /></svg>删除对象</button>
            <button class="big" disabled><svg class="i22"><use href="#o-info" /></svg>信息</button>
            <button class="big" disabled><svg class="i22"><use href="#o-show" /></svg>显示对象</button>
            <button class="drop low" aria-label="工具条选项"><i class="caret"></i></button>
        </div>
    </div>

    <div class="selbar">
        <span class="combo off w-type"><select disabled aria-label="类型过滤器"><option></option></select></span>
        <span class="combo off w-scope"><select disabled aria-label="选择范围"><option>整个装配</option></select></span>
        <svg class="i18 dim"><use href="#find" /></svg>
        <span class="sep"></span>
        <svg class="i18"><use href="#filter" /></svg><i class="caret"></i>
        <svg class="i16 dim"><use href="#back" /></svg>
        <svg class="i16 dim"><use href="#rock" /></svg>
        <svg class="i16 dim"><use href="#rot" /></svg>
        <svg class="i16 dim"><use href="#hammer" /></svg>
        <span class="sep"></span>
        <svg class="i16"><use href="#marquee" /></svg><i class="caret"></i>
        <span class="sep"></span>
        <svg class="i18"><use href="#cube" /></svg>
        <i class="caret last"></i>
    </div>

    <div class="cue">
        <p>选择“步进”或“播放”，开始动态材料移除</p>
        <span class="status"></span>
        <span class="cell"></span>
        <span class="cell wide-cell"></span>
        <span class="cell"><svg class="i16"><use href="#full" /></svg></span>
    </div>

    <main>
        <aside class="resource">
            <button class="tab" aria-label="装配导航器"><svg class="i24"><use href="#s-asm" /></svg></button>
            <button class="tab" aria-label="约束导航器"><svg class="i24"><use href="#s-mir" /></svg></button>
            <button class="tab" aria-label="部件导航器"><svg class="i24"><use href="#s-part" /></svg></button>
            <button class="tab active" aria-label="工序导航器"><svg class="i24"><use href="#s-op" /></svg></button>
            <button class="tab" aria-label="机床导航器"><svg class="i24"><use href="#s-mach" /></svg></button>
            <button class="tab" aria-label="加工特征"><svg class="i24"><use href="#s-cam" /></svg></button>
            <button class="tab" aria-label="重用库"><svg class="i24"><use href="#s-lib" /></svg></button>
            <button class="tab apart" aria-label="HD3D 工具"><svg class="i24"><use href="#s-info" /></svg></button>
            <button class="tab apart" aria-label="浏览器"><svg class="i24"><use href="#s-web" /></svg></button>
            <button class="tab apart" aria-label="历史记录"><svg class="i24"><use href="#s-clock" /></svg></button>
            <button class="tab" aria-label="角色"><svg class="i24"><use href="#s-role" /></svg></button>
            <button class="tab torn" aria-label="系统材料"><svg class="i24"><use href="#s-heat" /></svg></button>
            <div class="pager">
                <button aria-label="顶部" disabled><svg viewBox="0 0 14 14"><path d="M3 3h8v1H3zM7 5l4 4H3z" /></svg></button>
                <button aria-label="上移" disabled><svg viewBox="0 0 14 14"><path d="M7 4l4 4H3z" /></svg></button>
                <button aria-label="下移"><svg viewBox="0 0 14 14"><path d="M7 9L3 5h8z" /></svg></button>
                <button aria-label="底部"><svg viewBox="0 0 14 14"><path d="M7 8L3 4h8zM3 9h8v1H3z" /></svg></button>
            </div>
        </aside>

        <section class="navigator">
            <h2><svg class="i12"><use href="#pin" /></svg>工序导航器<span class="en"> - </span>程序顺序</h2>
            <div class="grid-box">
                <div class="grid-clip">
                    <table>
                        <thead>
                            <tr>
                                <th class="c-name">名称</th>
                                <th class="c-path">刀轨</th>
                                <th class="c-tool">刀具</th>
                                <th class="c-time">时间</th>
                                <th class="c-geom">几何体</th>
                                <th class="c-stock">余量</th>
                                <th>速度</th>
                            </tr>
                        </thead>
                        <tbody id="operations"></tbody>
                    </table>
                </div>
                <div class="hscroll">
                    <svg viewBox="0 0 16 16"><path d="M10 4L6 8l4 4" /></svg>
                    <span class="thumb"></span>
                    <svg viewBox="0 0 16 16"><path d="M6 4l4 4l-4 4" /></svg>
                </div>
            </div>
            <div class="splitter"><span></span></div>
            <button class="fold">相依性<svg viewBox="0 0 12 12"><path d="M1 2l5 7l5-7" /></svg></button>
            <button class="fold">细节<svg viewBox="0 0 12 12"><path d="M1 2l5 7l5-7" /></svg></button>
        </section>

        <section class="viewport">
            <svg viewBox="617 193 983 604" preserveAspectRatio="xMinYMin slice">
                <defs>
                    <pattern id="dots" width="11" height="14" patternUnits="userSpaceOnUse">
                        <path d="M1.500 1v4M5.500 6v4M9.500 10v4M3.500 10v3M7.500 1v3" stroke="#16c8a8" opacity=".75" />
                    </pattern>
                </defs>
                <g fill="url(#dots)">
                    <path d="M618 400l8 10l10 55l8 40l-8 45l-18 60z" />
                    <path d="M645 332l14 5l5 45l18 15l8 35l16 40l-14-8l-18-38l-18-26z" />
                    <path d="M690 706l30-14l22 34l30 66h-56l-28-60z" />
                    <path d="M776 640l19 14v58l-19-6z" />
                </g>
                <path d="M709 193L795 321M618 611L743 797M778 797L795 791M1085 633L1600 285" stroke="#2d2f30" stroke-width="2" />

                <g class="part" transform="translate(1080 380) scale(.3333)">
                    <!-- shaded facets -->
                    <path d="M15 770L330 560L620 375L740 285L820 235L1120 25L1385-145L1490-75L1060 205L780 420L380 740L15 960z" fill="#2f86b6" opacity=".25" />
                    <path d="M400 530L620 380L740 290L820 235L880 275L920 290L1000 305L760 480L640 545z" fill="#27658c" opacity=".35" />
                    <path d="M520 440l120 28l-70-66zM630 370l90 70l60-70zM740 290l130-20l-50-35zM400 530l60-50l40 80z" fill="#214f70" opacity=".2" />
                    <path d="M815 240l110 45l20 50l-90 70l-150-60z" fill="#1e5376" opacity=".3" />
                    <path d="M330 560l70 50l90-50l60 60l-120 90l-60-60l-120 60l-40-60z" fill="#2b78a6" opacity=".2" />
                    <path d="M20 780l200-90l120 8l60 60l40 80l5 60l-120 80L200 900l-185 80z" fill="#2f86b6" opacity=".35" />
                    <path d="M15 960L340 800L590 975L400 1110L15 1240z" fill="#3fb2f2" opacity=".35" />
                    <path d="M15 1180l150-70l100-45l-70 50L15 1240z" fill="#5dcbff" opacity=".8" />
                    <path d="M400 955h80l-140 60zM980 245l30 55l-80-10z" fill="#4cc2ff" opacity=".6" />
                    <path d="M190 690l120 5q130 50 140 190M20 780l120 60M640 360L900 180" fill="none" stroke="#245f80" stroke-width="3" stroke-dasharray="3 9" />
                    <path d="M700 388L865 275M740 290L820 235L880 272M830 272h45" stroke="#16384c" stroke-width="4" fill="none" />
                    <path d="M825 280l50-5l-15 20l-45 15z" fill="#10d69c" />
                    <path d="M775 342L900 270L1040 210L960 262L860 320L795 348z" fill="#0a8060" />
                    <path d="M900 270L1040 210L930 285z" fill="#0b4a38" />
                    <path d="M775 342l90-45l-20 28l-50 20z" fill="#10b888" />

                    <!-- swept tool path -->
                    <path d="M15 1012L180 920L372 812L300 878L15 1062z" fill="#0ff" />
                    <path d="M15 970L120 895L280 790L480 660L640 555L740 483L880 393L1000 308L1090 255L1120 265L1080 290L1020 318L860 430L790 485L620 600L560 625L470 700L360 772L270 815L150 886L60 948L15 985z" fill="#0ff" />
                    <path d="M35 970l15 30M70 945l-20 45M110 920l-25 48M145 895l-22 52M180 872l-22 50M215 850l-20 46M245 830l-16 42M275 812l-12 40M305 803l-8 30M300 808h70" stroke="#0ff" stroke-width="8" fill="none" />
                    <path d="M1095 248l30-20l32 7l-42 18zM1145 214l32-16l75-5l-35 16zM1210 175l35-18l80-8l-45 18zM1270 135l50-32l44-4l-8 10zM1070 262l50-2l-50 18zM560 605l100-20l-80 30zM640 565l70-20l-50 30z" fill="#0ff" />

                    <path d="M410 910l30-12M465 878l60-40M590 790l60-30M720 705l25-14M775 665l30-14M885 600l10-5M990 520l50-30M1130 422l40-22M1235 358l30-14M1305 318l30-20" stroke="#0a0ad8" stroke-width="7" />
                    <path d="M295 803l45 155M357 763l45 155M390 740l47 158M424 720l42 155M456 698l42 155M487 678l44 158M517 656l42 156M547 636l42 155M575 617l48 155M667 583l18 160M674 553l38 160M692 563l22 158M726 513l46 160M752 522l18 146M760 492l45 155M825 453l40 155M862 455l8 153M858 455l38 140M855 430l14 40M885 407l40 155M914 385l42 160M942 367l46 155M971 347l46 155M1008 323l43 155M1050 285l42 170M1050 285l68 150M1128 243l42 158M1201 203l30 160M1271 162l27 160M1320 122l52 145" stroke="#ff0" stroke-width="8" />
                    <path d="M378 772l16 160M1050 288l62 150" stroke="#fff" stroke-width="10" />
                    <path d="M15 1113L340 960L435 918L440 903L530 840L650 762L720 730L745 712L750 692L805 668L808 650L830 633L885 613L940 562L1140 432L1240 365L1300 322L1408 262L835 1251" fill="none" stroke="#f00" stroke-width="7" />
                </g>
                <path d="M617 785L1600 448" stroke="#f00" stroke-width="2.500" />

                <!-- WCS triad -->
                <path d="M671 743l14-9l12 15l-16 11z" fill="#b4c2cc" stroke="#96588c" />
                <path d="M668 743l24-14" stroke="#1036e0" stroke-width="3" />
                <path d="M687 727l11-3l-7 8z" fill="#1036e0" />
                <path d="M669 745l14 22" stroke="#c42a2a" stroke-width="3" />
                <path d="M680 766l7-2l0 8z" fill="#c42a2a" />
                <circle cx="668" cy="743" r="4" fill="#ececec" stroke="#888" stroke-width=".5" />
                <text x="698" y="726" class="ax-z">Z</text>
                <text x="687" y="780" class="ax-x">X</text>
                <text x="624" y="792" class="cam-label">TOP WORK Camera TOP</text>
            </svg>
        </section>
    </main>

    <footer class="bar cam views">
        <div class="group">
            <span class="grip"></span>
            <button class="big" disabled><svg class="i22"><use href="#v-prog" /></svg>程序顺序<br>视图</button>
            <button class="big" disabled><svg class="i22"><use href="#v-tool" /></svg>机床视图</button>
            <button class="big" disabled><svg class="i22"><use href="#v-geo" /></svg>几何视图</button>
            <button class="big" disabled><svg class="i22"><use href="#v-way" /></svg>加工方法<br>视图</button>
            <button class="drop low" aria-label="工具条选项"><i class="caret"></i></button>
        </div>
        <div class="group shape">
            <span class="grip"></span>
            <button class="big"><svg class="i22"><use href="#draft" /></svg>拔模分析</button>
            <button class="drop" aria-label="更多"><i class="caret"></i></button>
            <button class="big" disabled><svg class="i22"><use href="#point" /></svg>点<span class="en">(P)...</span></button>
            <button class="drop" aria-label="更多"><i class="caret"></i></button>
            <button class="big" disabled><svg class="i22"><use href="#curve" /></svg>复合曲线<br><span class="en">(O)...</span></button>
            <button class="drop" aria-label="更多"><i class="caret"></i></button>
            <button class="big" disabled><svg class="i22"><use href="#patch" /></svg>修补开口<br><span class="en">(P)...</span></button>
            <button class="big"><svg class="i24"><use href="#sync" /></svg>同步建模<br>工具条</button>
            <button class="big" disabled><svg class="i22"><use href="#facet" /></svg>小平面化<br><span class="en">(C)...</span></button>
            <button class="drop" aria-label="更多"><i class="caret"></i></button>
            <button class="drop low" aria-label="工具条选项"><i class="caret"></i></button>
        </div>
    </footer>

    <div class="dialog" role="dialog" aria-labelledby="dlg-title">
        <div class="dlg-head">
            <h2 id="dlg-title">刀轨可视化</h2>
            <button class="win-btn close" aria-label="关闭对话框"><svg viewBox="0 0 18 18"><path d="M4 4l10 10M14 4L4 14" stroke="#fff" stroke-width="2.500" /></svg></button>
        </div>
        <div class="dlg-body">
            <div class="listbox">
                <div class="list-top">
                    <ul role="listbox" aria-label="刀轨">
                        <li>GOTO/44.147,-135.883,-2.583</li>
                        <li>CIRCLE/45.004,-130.086,-2.583,0.0000000,-</li>
                        <li>GOTO/45.000,-135.946,-2.583</li>
                        <li>GOTO/45.002,-132.146,-2.583</li>
                        <li>GOTO/45.002,-132.146,0.417</li>
                        <li class="on">GOTO/45.002,-132.146,10.000</li>
                    </ul>
                    <div class="vscroll">
                        <svg viewBox="0 0 16 16"><path d="M4 10l4-4l4 4" /></svg>
                        <span class="thumb"></span>
                        <svg viewBox="0 0 16 16"><path d="M4 6l4 4l4-4" /></svg>
                    </div>
                </div>
                <div class="hscroll">
                    <svg viewBox="0 0 16 16"><path d="M10 4L6 8l4 4" /></svg>
                    <span class="thumb"></span>
                    <svg viewBox="0 0 16 16"><path d="M6 4l4 4l-4 4" /></svg>
                </div>
            </div>

            <div class="slider">
                <output class="en">4876</output>
                <input type="range" min="1" max="4876" value="4876" aria-label="运动">
                <div class="ends en"><span>1</span><span>4876</span></div>
            </div>
            <p class="feed">进给率（毫米每分钟）<span class="en"> 0.000000</span></p>

            <div class="tabs" role="tablist">
                <button role="tab">重播</button>
                <button role="tab" class="active"><span class="en">3D </span>动态</button>
                <button role="tab"><span class="en">2D </span>动态</button>
            </div>
            <div class="pane">
                <div class="row"><label for="tool-show">刀具显示</label><span class="combo w-50"><select id="tool-show"><option>实体</option></select></span></div>
                <div class="row"><label for="show">显示</label><span class="combo w-98"><select id="show"><option>全部</option></select></span></div>
                <div class="row dim-text"><label for="res"><span class="en">IPW </span>分辨率</label><span class="combo off w-62"><select id="res" disabled><option>中等</option></select></span></div>
                <button class="btn">显示选项</button>
                <hr>
                <div class="row"><label for="ipw"><span class="en">IPW</span></label><span class="combo w-86"><select id="ipw"><option>无</option></select></span></div>
                <fieldset>
                    <b>小平面化的实体</b>
                    <div class="radios">
                        <label><input type="radio" name="solid" checked><span class="en">IPW</span></label>
                        <label><input type="radio" name="solid">过切</label>
                        <label><input type="radio" name="solid">过剩</label>
                    </div>
                </fieldset>
                <div class="btns short"><button class="btn">创建</button><button class="btn" disabled>删除</button><button class="btn">分析</button></div>
                <button class="btn thick">通过颜色表示厚度</button>
                <hr>
                <label class="check"><input type="checkbox" checked><span><span class="en">IPW </span>碰撞检查</span></label>
                <label class="check"><input type="checkbox" checked>检查刀具和夹持器</label>
                <div class="btns"><button class="btn" disabled>选项</button><button class="btn" disabled>列表</button></div>
                <hr>
                <button class="btn">重置</button>
                <hr>
                <label class="check"><input type="checkbox">抑制动画</label>
            </div>

            <p class="speed">动画速度</p>
            <div class="slider">
                <output class="en inset">10</output>
                <input type="range" min="1" max="10" value="10" aria-label="动画速度">
                <div class="ends en"><span>1</span><span>10</span></div>
            </div>

            <div class="player">
                <button aria-label="倒回"><svg viewBox="0 0 24 24"><path class="bar-mark" d="M2 4h2v16H2z" /><path d="M13 4v16L5 12zM22 4v16l-8-8z" /></svg></button>
                <button aria-label="单步向后"><svg viewBox="0 0 24 24"><path class="bar-mark" d="M6 4h2v16H6z" /><path d="M17 4v16l-8-8z" /></svg></button>
                <button aria-label="反向"><svg viewBox="0 0 24 24"><path d="M16 4v16l-8-8z" /></svg></button>
                <button aria-label="播放"><svg viewBox="0 0 24 24"><path d="M9 4v16l8-8z" /></svg></button>
                <button aria-label="步进"><svg viewBox="0 0 24 24"><path class="bar-mark" d="M17 4h2v16h-2z" /><path d="M8 4v16l8-8z" /></svg></button>
                <button aria-label="前进"><svg viewBox="0 0 24 24"><path class="bar-mark" d="M21 4h2v16h-2z" /><path d="M3 4v16l8-8zM12 4v16l8-8z" /></svg></button>
                <button aria-label="停止" disabled><svg viewBox="0 0 24 24"><path d="M6 6h12v12H6z" /></svg></button>
            </div>
        </div>
        <div class="dlg-foot">
            <button class="btn ok-btn">确定</button>
            <button class="btn">取消</button>
        </div>
    </div>

    <div class="ime">
        <svg class="sogou" viewBox="0 0 28 28">
            <path d="M4 3L22 1q3 0 3 3l3 17q0 3-3 3L8 28q-3 0-4-3L0 7q0-3 4-4z" fill="#f0501c" />
            <path d="M21 7Q8 4 8 10q0 3 7 4q7 1 7 4q-2 6-15 3" fill="none" stroke="#fff" stroke-width="4" />
        </svg>
        <b>英</b>
        <svg viewBox="0 0 16 16"><circle cx="5" cy="5" r="2" /><path d="M10 7h4q0 5-4 6l2-4h-2z" /></svg>
        <svg viewBox="0 0 16 16"><circle cx="8" cy="8" r="7" class="line" /><path d="M5 5h1v3H5zM10 5h1v3h-1z" /><path d="M4 9q4 5 8 0" class="line" /></svg>
        <svg viewBox="0 0 16 16"><path d="M5 3q3-5 6 0v5q-3 4-6 0zM7 12h2v2h2v2H5v-2h2z" /><path d="M3 7q1 6 5 6t5-6" class="line" /></svg>
        <svg viewBox="0 0 16 16"><path d="M1 3h14v10H1z" class="line" /><path d="M3 5h2v2H3zM6 5h2v2H6zM9 5h2v2H9zM12 5h1v2h-1zM4 8h2v1H4zM7 8h2v1H7zM10 8h2v1h-2zM4 10h8v1H4z" /></svg>
        <svg viewBox="0 0 16 16" class="off"><circle cx="7" cy="4" r="3" /><path d="M2 15q0-7 6-7l2 1v6zM11 9h4v6h-4z" /></svg>
        <svg viewBox="0 0 16 16"><path d="M5 1q3 3 6 0l5 3l-2 4l-2-1v8H4V7L2 8L0 4z" /></svg>
        <svg viewBox="0 0 16 16"><path d="M1 13l7-7q-1-5 5-6l-3 4l2 2l4-2q0 6-6 5l-7 7q-3 0-2-3z" /></svg>
    </div>

    <div class="watermark">
        <svg viewBox="0 0 72 82">
            <path d="M36 0L71 20V62L36 82L1 62V20z" fill="#3fa9df" opacity=".7" />
            <path d="M36 0l12 9q7 9 7 20Q33 10 1 22v-2z" fill="#cfe6f4" opacity=".35" />
            <path d="M20 32L36 23L54 32V52L36 61L20 52z" fill="none" stroke="#e8f1f6" stroke-width="3" opacity=".8" />
            <path d="M23 35L36 42L51 35M36 42V58M55 8Q59 28 54 34M1 22Q24 10 52 30M21 30Q10 52 20 62M20 52Q34 68 54 56M54 52Q66 42 70 28M56 54Q48 72 34 80" fill="none" stroke="#e8f1f6" stroke-width="1.500" opacity=".8" />
        </svg>
        <div>
            <strong>3D世界网</strong>
            <span>WWW.3DSJW.COM</span>
        </div>
    </div>

    <script src="operations.js"></script>
</body>

</html>
```

FILE: operations.js
```js
const operations = [
    { level: 0, name: 'NC_PROGRAM', time: '07:53:58' },
    { level: 1, name: '未用项', time: '00:00:00' },
    { level: 1, status: 'warn', name: 'PROGRAM', time: '00:00:00' },
    { level: 1, status: 'warn', name: '上模', time: '05:31:09', toggle: '+' },
    { level: 1, status: 'stop', name: '下模', time: '02:22:49', toggle: '-' },
    { level: 2, status: 'ok', icon: 'planar', name: 'PLANAR_PRO...', tool: 'D12', time: '00:45:20', geom: '下模', stock: '0.0000', speed: '5800 rpm', link: true },
    { level: 2, status: 'ok', icon: 'hole', name: 'HOLE_MILLI...', tool: 'D12', time: '00:41:49', geom: '下模', stock: '', speed: '6800 rpm' },
    { level: 2, status: 'warn', icon: 'cavity', name: 'CAVITY_MILL', tool: 'D12', time: '00:11:33', geom: '下模', stock: '0.2000', speed: '6800 rpm' },
    { level: 2, status: 'warn', icon: 'hole', name: 'HOLE_MILLI...', tool: 'D10', time: '00:01:25', geom: '下模', stock: '', speed: '6800 rpm', link: true },
    { level: 2, status: 'stop', icon: 'cavity', name: 'CAVITY_MIL...', tool: 'D12', time: '00:11:38', geom: 'XM1', stock: '0.2000', speed: '6800 rpm', link: true },
    { level: 2, status: 'ok', icon: 'cavity', name: 'CAVITY_MIL...', tool: 'D6', time: '00:07:14', geom: 'XM1', stock: '0.2000', speed: '9000 rpm', link: true },
    { level: 2, status: 'warn', icon: 'cavity', name: 'CAVITY_MIL...', tool: 'D4', time: '00:22:49', geom: 'XM1', stock: '0.2000', speed: '9000 rpm', selected: true }
];
const emptyRows = 20;

// Latin text uses the narrow fixed-width face
function label(text = '') {
    return /^[\x20-\x7e]+$/.test(text) ? `<span class="en">${text}</span>` : text;
}

function icon(id, cls) {
    return id ? `<svg class="${cls}"><use href="#${id}" /></svg>` : '';
}

function guide(op, index) {
    if (op.level === 0) return '';
    const width = op.level === 1 ? 20 : 40;
    const x = op.level === 1 ? 9 : 28;
    const bottom = index === 4 || index === operations.length - 1 ? 10 : 20;
    let lines = `<path class="dots" d="M${x + 0.5} ${index === 1 ? 10 : 0}V${bottom}M${x} 10.5H${x + 9}" />`;
    if (op.toggle) {
        lines += `<rect x="4.5" y="5.5" width="8" height="8" rx="1" fill="#fff" stroke="#888" /><path d="M6 9.5h5${op.toggle === '+' ? 'M8.5 7v5' : ''}" stroke="#000" />`;
    }
    return `<svg class="guide" width="${width}" height="20">${lines}</svg>`;
}

function createRow(op, index) {
    const row = document.createElement('tr');
    row.className = (op.link ? 'link ' : '') + (op.selected ? 'selected' : '');
    const type = op.icon || (op.level === 1 ? 'folder' : '');
    row.innerHTML = `
        <td class="name"><div>${guide(op, index)}${icon(op.status, `st l${op.level} ${op.status}`)}${icon(type, 'i16')}<span class="caption">${label(op.name)}</span></div></td>
        <td>${op.icon ? icon('ok', 'i12') : ''}</td>
        <td>${label(op.tool)}</td>
        <td>${label(op.time)}</td>
        <td>${label(op.geom)}</td>
        <td>${label(op.stock)}</td>
        <td>${label(op.speed)}</td>`;
    return row;
}

const body = document.getElementById('operations');
operations.forEach((op, index) => body.appendChild(createRow(op, index)));

for (let i = 0; i < emptyRows; i++) {
    const row = document.createElement('tr');
    row.innerHTML = '<td class="name"></td>' + '<td></td>'.repeat(6);
    body.appendChild(row);
}
```

FILE: styles.css
```css
* {
    margin: 0;
    padding: 0;
    box-sizing: border-box;
}

body {
    position: relative;
    display: flex;
    flex-direction: column;
    height: 100vh;
    min-height: 700px;
    overflow: hidden;
    font: 12px/16px "Noto Sans CJK SC", sans-serif;
    text-spacing-trim: space-all;
    color: #000;
    background: #d4d4d4;
}

button,
select {
    font: inherit;
    color: inherit;
    border: none;
    background: none;
}

button {
    white-space: nowrap;
}

.defs {
    position: absolute;
    width: 0;
    height: 0;
}

.en {
    font-family: "DejaVu Sans Mono", monospace;
    font-size: 10px;
    white-space: pre;
}

.i12 { width: 12px; height: 12px; }
.i16 { width: 16px; height: 16px; }
.i18 { width: 18px; height: 18px; }
.i22 { width: 22px; height: 22px; }
.i24 { width: 24px; height: 24px; }

svg {
    flex-shrink: 0;
}

.caret {
    flex-shrink: 0;
    width: 5px;
    height: 3px;
    background: #000;
    clip-path: polygon(0 0, 100% 0, 50% 100%);
}

.grip {
    flex-shrink: 0;
    width: 2px;
    align-self: stretch;
    margin: 6px 2px 6px 4px;
    background: repeating-linear-gradient(#999 0 2px, transparent 2px 5px);
}

.sep {
    flex-shrink: 0;
    width: 2px;
    align-self: stretch;
    margin: 3px 2px;
    border-left: 1px solid #aaa;
    border-right: 1px solid #f4f4f4;
}

/* title bar */
.titlebar {
    display: flex;
    align-items: center;
    flex: 0 0 23px;
    padding: 0 2px;
    color: #fff;
    background: linear-gradient(#000 0 1px, #77777c 1px, #4a4a4e 8px, #1b1b1b 8px, #1b1b1b 22px, #000 22px);
}

.titlebar h1 {
    flex: 1;
    margin-left: 4px;
    font: 13px/16px "Open Sans", "Noto Sans CJK SC", sans-serif;
}

.brand {
    margin-right: 24px;
    font: bold 14px/16px "Open Sans", sans-serif;
}

.win-btn {
    width: 19px;
    height: 20px;
    margin-left: 4px;
    border: 1px solid #777;
    border-radius: 3px;
    background: linear-gradient(#777, #333 50%, #222);
}

.win-btn svg {
    display: block;
    width: 17px;
    height: 18px;
}

.win-btn.close {
    border-color: #eea08c;
    background: linear-gradient(#f08a70, #d8341a 50%, #e8553a);
}

/* menu */
.menubar {
    display: flex;
    align-items: center;
    flex: 0 0 24px;
    border-bottom: 1px solid #bbb;
    background: linear-gradient(#e6e6e6, #dedede);
}

.menubar > .i16 {
    margin-right: 6px;
}

.menubar > button {
    margin-right: 13px;
}

.mdi {
    display: flex;
    gap: 2px;
    margin-left: auto;
    padding-right: 4px;
}

.mdi button {
    width: 17px;
    height: 17px;
    border: 1px solid #777;
    border-radius: 3px;
    background: linear-gradient(#fff, #d8d8d8);
}

.mdi button:disabled {
    border-color: #bbb;
}

.mdi svg {
    display: block;
}

/* toolbars */
.bar {
    display: flex;
    background: linear-gradient(#dedede, #c8c8c8);
}

.bar .group {
    display: flex;
    align-items: center;
    flex-shrink: 0;
    border-right: 1px solid #b4b4b4;
    border-bottom: 1px solid #b4b4b4;
    box-shadow: inset 1px 1px #f4f4f4;
}

.std {
    flex: 0 0 34px;
    background: #d6d6d6;
}

.std .group {
    background: linear-gradient(#e4e4e4, #d8d8d8);
}

.std .utility {
    margin-left: 211px;
}

.tb,
.drop,
.wide {
    display: flex;
    align-items: center;
    justify-content: center;
    align-self: stretch;
    flex-shrink: 0;
}

.tb {
    width: 31px;
}

.drop {
    width: 12px;
}

.drop.low {
    align-items: flex-end;
    padding-bottom: 8px;
}

.wide {
    gap: 4px;
    padding: 0 3px;
}

button:disabled svg,
.dim {
    opacity: 0.5;
}

.cam {
    flex: 0 0 62px;
    min-height: 0;
    border-bottom: 1px solid #999;
}

.cam .sep {
    margin: 3px 2px;
}

.big {
    align-self: flex-start;
    width: 60px;
    padding-top: 5px;
    line-height: 13px;
}

.big svg {
    display: block;
    height: 22px;
    margin: 0 auto 5px;
}

.big:disabled {
    color: #8c8c8c;
}

.cam .objects {
    margin-left: 278px;
    box-shadow: none;
}

/* selection bar */
.selbar {
    display: flex;
    align-items: center;
    flex: 0 0 28px;
    gap: 6px;
    padding: 0 6px 0 5px;
    border-bottom: 1px solid #b4b4b4;
    background: linear-gradient(#c4c4c4, #dcdcdc 8px, #d2d2d2);
}

.selbar .sep {
    margin: 3px 0;
}

.selbar .caret {
    margin-left: -2px;
}

.selbar .last {
    margin: 10px 0 0 auto;
}

.cue {
    display: flex;
    flex: 0 0 22px;
    align-items: stretch;
    border-top: 1px solid #f2f2f2;
    border-bottom: 2px solid #8a8a8a;
    background: #dadada;
}

.cue p {
    width: 762px;
    padding-left: 3px;
    font-size: 13px;
    line-height: 19px;
    font-weight: bold;
    border-right: 1px solid #aaa;
}

.status {
    flex: 1;
}

.cell {
    width: 22px;
    padding: 2px 4px;
    border-left: 1px solid #aaa;
    box-shadow: inset 1px 0 #f4f4f4;
}

.cell .i16 {
    width: 14px;
    height: 14px;
}

.wide-cell {
    width: 35px;
}

/* work area */
main {
    display: flex;
    flex: 1;
    min-height: 0;
}

.resource {
    display: flex;
    flex-direction: column;
    align-items: flex-end;
    gap: 2px;
    width: 34px;
    padding-top: 16px;
    border-right: 2px solid #888;
    background: linear-gradient(90deg, #a0a0a0, #b4b4b4);
}

.tab {
    flex-shrink: 0;
    width: 26px;
    height: 40px;
    padding: 7px 0 7px 1px;
    border: 1px solid #666;
    border-right: none;
    border-radius: 3px 0 0 3px;
    background: linear-gradient(#dedede, #c8c8c8);
    overflow: hidden;
}

.tab svg {
    display: block;
}

.tab.active {
    width: 28px;
    height: 44px;
    margin: -2px -2px -2px 0;
    background: #ececec;
}

.tab.apart {
    margin-top: 12px;
}

.tab.torn {
    height: 17px;
}

.pager {
    align-self: flex-start;
    display: flex;
    flex-direction: column;
    gap: 1px;
    margin: 3px 0 0 10px;
}

.pager button {
    width: 15px;
    height: 15px;
    border: 1px solid #777;
    border-top-color: #fff;
    border-left-color: #fff;
    background: #dedede;
}

.pager svg {
    display: block;
    fill: #222;
}

.navigator {
    display: flex;
    flex-direction: column;
    width: 583px;
    padding: 0 10px 5px 9px;
    border-right: 2px solid #777;
    background: #ebebeb;
}

.navigator h2 {
    display: flex;
    align-items: center;
    height: 33px;
    padding: 4px 0 0 5px;
    font-size: 13px;
}

.navigator h2 svg {
    margin-right: 12px;
}

.navigator h2 .en {
    font-size: 12px;
}

.grid-box {
    display: flex;
    flex-direction: column;
    flex: 1;
    min-height: 0;
    border: 1px solid #777;
    background: #fff;
}

.grid-clip {
    flex: 1;
    min-height: 0;
    overflow: hidden;
}

table {
    width: 100%;
    table-layout: fixed;
    border-spacing: 0;
}

th {
    height: 17px;
    padding-left: 6px;
    font-weight: normal;
    line-height: 14px;
    text-align: left;
    border-right: 1px solid #aaa;
    border-bottom: 1px solid #888;
    background: linear-gradient(#f4f5f5 50%, #e0e3e3 50%);
}

.c-name { width: 159px; }
.c-path { width: 52px; }
.c-tool { width: 46px; }
.c-time { width: 69px; }
.c-geom { width: 58px; }
.c-stock { width: 100px; }

td {
    height: 20px;
    padding-left: 4px;
    line-height: 16px;
    color: #222;
    white-space: nowrap;
    border-right: 1px solid #e2e2e2;
    border-bottom: 1px solid #e2e2e2;
}

td .i12 {
    display: block;
    margin-left: 2px;
}

td.name {
    padding-left: 0;
    border-right-color: #000;
}

tr:nth-child(even) td {
    background: #f7f7f7;
}

td.name div {
    display: flex;
    align-items: center;
    height: 19px;
}

.guide .dots {
    stroke: #999;
    stroke-dasharray: 1 1;
    fill: none;
}

.st {
    width: 14px;
    height: 15px;
}

.st.ok {
    width: 12px;
    height: 12px;
    margin-right: 2px;
}

.st.l1 {
    margin-right: 2px;
}

td.name .i16 {
    width: 15px;
    height: 15px;
}

.caption {
    flex: 1;
    padding-left: 3px;
    line-height: 19px;
}

.link td {
    color: #0033cc;
}

.selected .caption,
tr.selected td:not(.name) {
    color: #fff;
    background: #3399ff;
}

.hscroll {
    display: flex;
    flex-shrink: 0;
    height: 16px;
    background: #f0f0f0;
}

.hscroll svg,
.vscroll svg {
    width: 16px;
    height: 16px;
    fill: none;
    stroke: #444;
    stroke-width: 2;
}

.hscroll .thumb {
    flex: 1;
    margin-right: 23px;
    background: #cbcbcb;
}

.splitter {
    display: flex;
    align-items: center;
    justify-content: center;
    flex: 0 0 13px;
    background: linear-gradient(#bbb, #bbb) center / 100% 1px no-repeat;
}

.splitter span {
    width: 117px;
    height: 6px;
    border: solid #ebebeb;
    border-width: 0 5px;
    background: #cbcbcb;
    box-shadow: inset 0 -1px #888;
}

.fold {
    display: flex;
    align-items: center;
    justify-content: space-between;
    flex: 0 0 23px;
    padding-left: 6px;
    font-size: 13px;
    font-weight: bold;
    border-bottom: 1px solid #999;
    background: linear-gradient(#f6f7f7 50%, #dcdfe0 50%);
}

.fold svg {
    width: 23px;
    padding: 0 5px;
    border-left: 1px solid #999;
    fill: none;
    stroke: #555;
    stroke-width: 2;
    align-self: stretch;
}

.viewport {
    flex: 1;
    min-width: 0;
    border: 1px solid #d2722c;
    background: #39a3dc;
}

.viewport > svg {
    display: block;
    width: 100%;
    height: 100%;
}

.viewport text {
    font: 12px "DejaVu Sans", sans-serif;
}

.cam-label { fill: #e8702a; }
.ax-z { fill: #1036e0; }
.ax-x { fill: #c43c3c; }

.views {
    flex-basis: 63px;
    border-top: 1px solid #888;
    border-bottom: none;
    background: linear-gradient(#e6e6e6, #cacaca);
}

.views .shape {
    margin-left: 38px;
}

/* tool path dialog */
.dialog {
    position: absolute;
    top: 77px;
    left: 795px;
    width: 290px;
    border: 1px solid #999;
    border-top: none;
    border-bottom: 8px solid #1b1b1b;
    border-radius: 6px 6px 5px 5px;
    background: #ebebeb;
}

.dlg-head {
    display: flex;
    align-items: center;
    justify-content: space-between;
    height: 24px;
    margin: 0 -1px;
    padding: 2px 4px 0 9px;
    color: #fff;
    border-radius: 6px 6px 0 0;
    background: linear-gradient(#000 0 1px, #77777c 1px, #4a4a4e 8px, #1b1b1b 8px);
}

.dlg-head h2 {
    font-size: 12px;
    font-weight: normal;
}

.dlg-head .win-btn {
    height: 18px;
}

.dlg-head .win-btn svg {
    height: 16px;
}

.dlg-body {
    padding: 8px 11px 0 9px;
}

.listbox {
    margin-left: 2px;
    width: 268px;
    height: 92px;
    border: 1px solid #777;
    background: #fff;
}

.list-top {
    display: flex;
    height: 74px;
}

.listbox ul {
    flex: 1;
    padding: 1px 0 0 1px;
    overflow: hidden;
    list-style: none;
    font: 10px/12px "DejaVu Sans Mono", monospace;
    white-space: nowrap;
}

.listbox li {
    padding-left: 2px;
}

.listbox .on {
    color: #fff;
    background: #3399ff;
}

.vscroll {
    display: flex;
    flex-direction: column;
    width: 16px;
    background: #f0f0f0;
}

.vscroll .thumb {
    flex: 1;
    margin-bottom: 12px;
    background: #cbcbcb;
}

.listbox .hscroll .thumb {
    flex: 0 0 93px;
    margin-right: auto;
}

.listbox .hscroll {
    padding-right: 18px;
}

.slider {
    display: flex;
    flex-direction: column;
    padding-left: 6px;
}

.slider output {
    height: 19px;
    line-height: 19px;
    text-align: right;
}

.slider output.inset {
    padding-right: 6px;
}

.ends {
    display: flex;
    justify-content: space-between;
    height: 18px;
    line-height: 18px;
}

input[type="range"] {
    width: 254px;
    height: 21px;
    margin-left: 1px;
    appearance: none;
    background: none;
}

input[type="range"]::-webkit-slider-runnable-track {
    height: 3px;
    border-top: 2px solid #999;
    border-bottom: 1px solid #fff;
}

input[type="range"]::-webkit-slider-thumb {
    appearance: none;
    width: 9px;
    height: 18px;
    margin-top: -10px;
    border: 1px solid #2c6f94;
    border-radius: 5px 5px 2px 2px;
    background: linear-gradient(#fff, #52c8f4);
}

.feed {
    height: 18px;
}

.tabs {
    display: flex;
    align-items: flex-end;
    height: 19px;
    padding-left: 2px;
}

.tabs button {
    width: 52px;
    height: 18px;
    border: 1px solid #777;
    border-bottom: none;
    border-radius: 4px 4px 0 0;
    background: linear-gradient(#eee 40%, #cfcfcf);
}

.tabs button:first-child {
    width: 47px;
}

.tabs .active {
    position: relative;
    width: 57px;
    height: 21px;
    margin-bottom: -1px;
    background: #ebebeb;
}

.pane {
    width: 268px;
    height: 363px;
    padding: 5px 7px 0 6px;
    border: 1px solid #777;
    border-right-width: 2px;
    background: linear-gradient(#ebebeb 88%, #dadada);
}

.row {
    display: flex;
    align-items: center;
    justify-content: space-between;
    height: 22px;
}

.dim-text {
    color: #999;
}

.combo {
    position: relative;
    display: flex;
    height: 19px;
    border: 1px solid #666;
    border-radius: 4px;
    overflow: hidden;
    background: #fff;
}

.combo select {
    width: 100%;
    padding: 0 18px 0 3px;
    appearance: none;
    outline: none;
    line-height: 17px;
    opacity: 1;
}

.combo::before,
.combo::after {
    content: "";
    position: absolute;
    top: 0;
    right: 0;
    width: 17px;
    height: 17px;
    border-left: 1px solid #5580b8;
    background: linear-gradient(#5f9ce4, #a8d4fa 50%, #6eb4ee 50%, #b4e0ff);
    pointer-events: none;
}

.combo::after {
    border: none;
    background: #1b1b1b;
    clip-path: polygon(4px 5px, 14px 5px, 9px 11px);
}

.combo.off {
    border-color: #aaa;
    background: #d2d2d2;
}

.combo.off::before {
    border-color: #bbb;
    background: linear-gradient(#f2f2f2, #ddd);
}

.combo.off::after {
    background: #8c8c8c;
}

.combo.off select {
    color: #8c8c8c;
}

.selbar .combo.off select {
    padding-left: 2px;
    color: #fff;
    text-shadow: -1px -1px #999;
}

.w-type { width: 112px; }
.w-scope { width: 118px; }
.w-50 { width: 50px; }
.w-62 { width: 62px; }
.w-86 { width: 86px; }
.w-98 { width: 98px; }

.btn {
    display: block;
    width: 100%;
    height: 22px;
    border: 1px solid #666;
    border-radius: 4px;
    box-shadow: inset 0 0 0 1px #ffffff88;
    background: linear-gradient(#f6f6f6, #d8d8d8 50%, #c6c6c6 50%, #f2f2f2);
}

.pane > .btn {
    margin-top: 3px;
}

.pane > .btn.thick {
    width: 250px;
    margin-top: 6px;
}

.btn:disabled {
    color: #999;
    border-color: #aaa;
    background: linear-gradient(#f6f6f6, #e4e4e4 50%, #ddd 50%, #f2f2f2);
}

.btns {
    display: flex;
    gap: 4px;
    width: 250px;
    margin-top: 1px;
}

.btns.short {
    width: 248px;
    margin-top: 5px;
}

hr {
    height: 2px;
    margin-top: 6px;
    border: solid #fff;
    border-width: 0 0 1px;
    background: #b4b4b4;
}

.pane > hr:first-of-type,
.pane > hr:last-of-type {
    margin-top: 4px;
}

fieldset {
    width: 175px;
    height: 42px;
    margin-left: 39px;
    padding: 1px 0 0 3px;
    border: 1px solid #999;
    background: #cfcfcf;
}

fieldset b {
    display: block;
    margin-left: 5px;
    font-size: 13px;
    line-height: 19px;
}

.radios {
    display: flex;
}

.radios label {
    display: flex;
    align-items: center;
    gap: 2px;
    width: 56px;
    height: 20px;
}

.check {
    display: flex;
    align-items: center;
    gap: 2px;
    height: 22px;
}

input[type="radio"],
input[type="checkbox"] {
    width: 16px;
    height: 16px;
    appearance: none;
    border: 1px solid #777;
    background: linear-gradient(#fff, #ccc);
}

input[type="radio"] {
    border-radius: 8px;
}

input[type="checkbox"] {
    border-radius: 2px;
}

input[type="radio"]:checked {
    border-color: #2f6d9c;
    background: radial-gradient(#0d4a86 3px, transparent 4px), linear-gradient(#d4f0ff, #3cc0ee);
}

input[type="checkbox"]:checked {
    position: relative;
    border-color: #2f6d9c;
    background: linear-gradient(#d4f0ff, #5cd0f6);
}

input[type="checkbox"]:checked::after {
    content: "";
    position: absolute;
    inset: 2px;
    background: #0c478c;
    clip-path: polygon(0 45%, 22% 35%, 42% 60%, 85% 0, 100% 15%, 45% 100%);
}

.speed {
    padding-top: 5px;
    height: 21px;
}

.player {
    display: flex;
    gap: 4px;
    padding: 1px 0 0 18px;
}

.player button {
    width: 30px;
    height: 30px;
    padding: 2px;
    border: 1px solid #777;
    border-radius: 3px;
    background: linear-gradient(#f6f6f6, #ddd 50%, #cfcfcf 50%, #eee);
}

.player svg {
    display: block;
    width: 24px;
    height: 24px;
    fill: #850c0c;
}

.player button:disabled {
    border-color: #bbb;
}

.player .bar-mark {
    fill: #10107c;
}

.dlg-foot {
    display: flex;
    gap: 7px;
    justify-content: flex-end;
    height: 30px;
    margin: 8px 6px 0;
    padding: 4px 10px 0 0;
    border-top: 1px solid #bbb;
    background: linear-gradient(#ebebeb, #dcdcdc);
}

.dlg-foot .btn {
    width: 64px;
    height: 19px;
    line-height: 15px;
}

.dlg-foot .ok-btn {
    border-color: #217a2a;
    background: linear-gradient(#e6f7e0, #8fd480 45%, #58bd48 50%, #b4f58e);
}

/* input method bar */
.ime {
    position: absolute;
    top: 571px;
    right: 19px;
    display: flex;
    align-items: center;
    gap: 6px;
    height: 23px;
    padding-right: 4px;
    color: #2476c4;
    background: #fff;
    box-shadow: 0 0 1px #888;
}

.ime svg {
    width: 16px;
    height: 16px;
    fill: #2476c4;
}

.ime .line {
    fill: none;
    stroke: #2476c4;
    stroke-width: 1.5;
}

.ime .off {
    fill: #b4bcd2;
}

.ime .sogou {
    width: 28px;
    height: 28px;
    margin-left: -6px;
}

.ime b {
    font-size: 15px;
}

.watermark {
    position: absolute;
    right: 23px;
    bottom: 11px;
    display: flex;
    align-items: center;
    gap: 9px;
    color: #ffffff88;
    pointer-events: none;
}

.watermark svg {
    width: 72px;
    height: 84px;
}

.watermark strong {
    display: block;
    font-size: 42px;
    line-height: 50px;
}

.watermark span {
    display: block;
    margin-bottom: 6px;
    font: bold 17px/20px "DejaVu Sans", sans-serif;
}
```
